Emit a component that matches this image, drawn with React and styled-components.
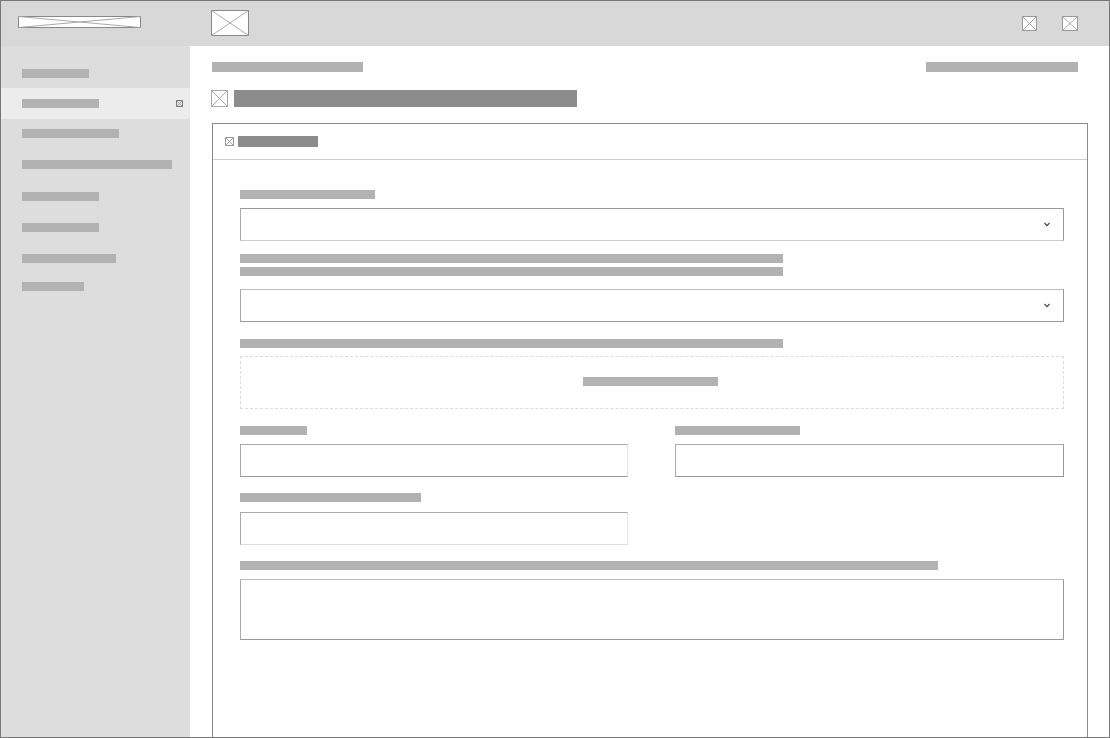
import React from 'react'
import styled, { createGlobalStyle } from 'styled-components'

const Global = createGlobalStyle`
  html, body { margin: 0; padding: 0; background: #fff; }
  * { box-sizing: border-box; }
`

const Frame = styled.div`
  width: 1110px;
  height: 738px;
  border: 1px solid #777;
  display: flex;
  flex-direction: column;
  overflow: hidden;
  background: #fff;
`

const Header = styled.header`
  height: 45px;
  flex: none;
  background: #d8d8d8;
  display: flex;
  align-items: center;
  padding: 0 31px 1px 17px;
`

const HeaderRight = styled.div`
  margin-left: auto;
  display: flex;
  align-items: center;
  gap: 25px;
  padding-top: 1px;
`

const Body = styled.div`
  flex: 1;
  min-height: 0;
  display: flex;
`

const Sidebar = styled.nav`
  width: 189px;
  flex: none;
  background: #ddd;
  padding-top: 12px;
  display: flex;
  flex-direction: column;
`

const NavItem = styled.div`
  height: ${p => p.$h}px;
  display: flex;
  align-items: center;
  justify-content: space-between;
  padding: 0 7px 0 21px;
  background: ${p => (p.$active ? '#ececec' : 'transparent')};
`

const Bar = styled.div`
  flex: none;
  width: ${p => p.$w}px;
  height: ${p => p.$h || 9}px;
  background: ${p => p.$dark ? '#8c8c8c' : '#b2b2b2'};
`

const Main = styled.main`
  flex: 1;
  min-width: 0;
  display: flex;
  flex-direction: column;
  padding: 16px 21px 0 22px;
`

const Crumbs = styled.div`
  display: flex;
  justify-content: space-between;
  padding-right: 10px;
`

const TitleRow = styled.div`
  display: flex;
  align-items: center;
  gap: 6px;
  margin: 18px 0 16px -1px;
`

const Card = styled.section`
  flex: 1;
  border: 1px solid #8a8a8a;
  border-bottom: none;
  margin-bottom: -4px;
`

const CardHead = styled.div`
  height: 36px;
  display: flex;
  align-items: center;
  gap: 4px;
  padding-left: 12px;
  border-bottom: 1px solid #ccc;
`

const Form = styled.div`
  padding: 30px 23px 0 27px;
  display: flex;
  flex-direction: column;
`

const Label = styled.div`
  display: flex;
  flex-direction: column;
  gap: 4px;
  margin-bottom: ${p => p.$mb || 9}px;
`

const Field = styled.div`
  height: ${p => p.$h || 33}px;
  width: ${p => p.$w ? `${p.$w}px` : '100%'};
  margin-bottom: ${p => p.$mb || 0}px;
  display: flex;
  align-items: center;
  justify-content: flex-end;
  padding-right: 13px;
  background: #fff;
  border-style: solid;
  border-width: 1px;
  border-color: ${p => p.$top || '#999'} ${p => p.$right || '#999'} ${p => p.$bottom || '#999'} #aaa;
`

const DropZone = styled.div`
  height: 53px;
  margin-bottom: 17px;
  border: 1px dashed #dcdcdc;
  display: flex;
  align-items: center;
  justify-content: center;
  padding: 0 3px 2px 0;
`

const TwoCols = styled.div`
  display: grid;
  grid-template-columns: 388px 389px;
  justify-content: space-between;
  margin-bottom: 16px;
`

const PlaceholderSvg = styled.svg`
  flex: none;
  display: block;
`

const Chevron = () => (
  <svg width="6" height="5" viewBox="0 0 6 5" fill="none">
    <path d="M0.5 1 L3 3.6 L5.5 1" stroke="#444" strokeWidth="1.2" />
  </svg>
)

const Placeholder = ({ w, h, fill = '#fff', stroke = '#999', line = '#aaa', className }) => (
  <PlaceholderSvg className={className} width={w} height={h} viewBox={`0 0 ${w} ${h}`}>
    <rect x="0.5" y="0.5" width={w - 1} height={h - 1} fill={fill} stroke={stroke} />
    <path d={`M0.5 0.5 L${w - 0.5} ${h - 0.5} M${w - 0.5} 0.5 L0.5 ${h - 0.5}`} stroke={line} strokeWidth="1" />
  </PlaceholderSvg>
)

const Logo = styled(Placeholder)`
  margin: 0 70px 2px 0;
`

// row heights follow the uneven spacing of the menu
const navItems = [
  { w: 67, h: 30 },
  { w: 77, h: 31, active: true },
  { w: 97, h: 28 },
  { w: 150, h: 35 },
  { w: 77, h: 28 },
  { w: 77, h: 34 },
  { w: 94, h: 28 },
  { w: 62, h: 29 },
]

export default function App() {
  return (
    <>
      <Global />
      <Frame>
        <Header>
          <Logo w={123} h={12} stroke="#888" />
          <Placeholder w={38} h={26} stroke="#888" />
          <HeaderRight>
            <Placeholder w={15} h={15} />
            <Placeholder w={16} h={15} />
          </HeaderRight>
        </Header>
        <Body>
          <Sidebar>
            {navItems.map((item, i) => (
              <NavItem key={i} $h={item.h} $active={item.active}>
                <Bar $w={item.w} />
                {item.active && <Placeholder w={7} h={7} fill="#e4e4e4" stroke="#777" />}
              </NavItem>
            ))}
          </Sidebar>
          <Main>
            <Crumbs>
              <Bar $w={151} $h={10} />
              <Bar $w={152} $h={10} />
            </Crumbs>
            <TitleRow>
              <Placeholder w={17} h={17} stroke="#aaa" />
              <Bar $w={343} $h={17} $dark />
            </TitleRow>
            <Card>
              <CardHead>
                <Placeholder w={9} h={9} />
                <Bar $w={80} $h={11} $dark />
              </CardHead>
              <Form>
                <Label><Bar $w={135} /></Label>
                <Field $mb={13} $bottom="#ccc"><Chevron /></Field>
                <Label $mb={13}><Bar $w={543} /><Bar $w={543} /></Label>
                <Field $mb={17} $top="#bbb"><Chevron /></Field>
                <Label $mb={8}><Bar $w={543} /></Label>
                <DropZone><Bar $w={135} /></DropZone>
                <TwoCols>
                  <div>
                    <Label><Bar $w={67} /></Label>
                    <Field $top="#aaa" $right="#e6e6e6" />
                  </div>
                  <div>
                    <Label><Bar $w={125} /></Label>
                    <Field $top="#aaa" />
                  </div>
                </TwoCols>
                <Label $mb={10}><Bar $w={181} /></Label>
                <Field $w={388} $mb={16} $top="#aaa" $bottom="#ddd" $right="#e6e6e6" />
                <Label><Bar $w={698} /></Label>
                <Field $h={61} $top="#bbb" />
              </Form>
            </Card>
          </Main>
        </Body>
      </Frame>
    </>
  )
}
